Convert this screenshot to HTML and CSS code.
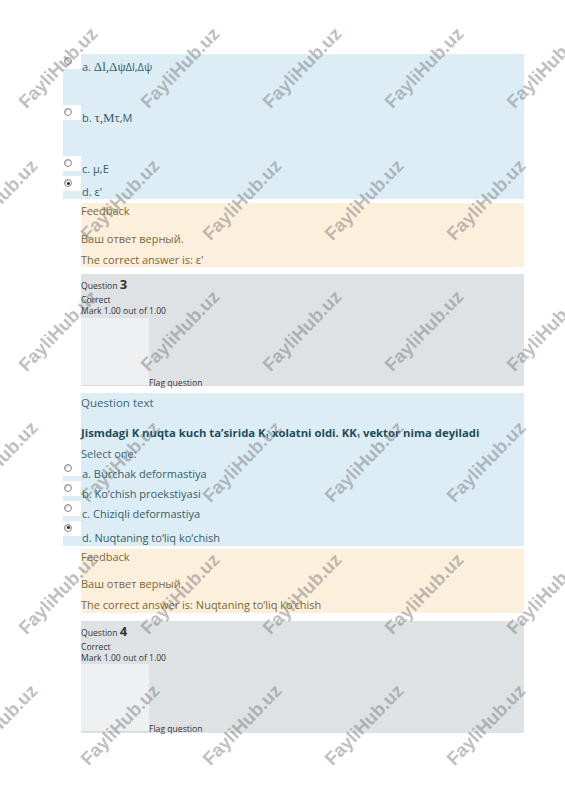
FILE: index.html
```html
<!DOCTYPE html>
<html lang="en">
<head>
<meta charset="utf-8">
<title>Quiz review</title>
<link rel="stylesheet" href="styles.css">
</head>
<body>
<div class="page">
  <div class="answers q1">
    <div class="opt tall">
      <div class="radio-cell"><div class="radio-box"><span class="radio"></span></div></div>
      <div class="label">a. <span class="math">Δl,Δψ</span>Δl,Δψ</div>
    </div>
    <div class="opt tall">
      <div class="radio-cell"><div class="radio-box"><span class="radio"></span></div></div>
      <div class="label">b. <span class="math">τ,M</span>τ,M</div>
    </div>
    <div class="opt">
      <div class="radio-cell"><div class="radio-box"><span class="radio"></span></div></div>
      <div class="label">c. μ,E</div>
    </div>
    <div class="opt last">
      <div class="radio-cell"><div class="radio-box"><span class="radio on"></span></div></div>
      <div class="label">d. ε'</div>
    </div>
  </div>

  <div class="feedback first">
    <div class="fb-title">Feedback</div>
    <div class="fb-line1">Ваш ответ верный.</div>
    <div class="fb-line2">The correct answer is: ε'</div>
  </div>

  <div class="info first">
    <div class="qno">Question <strong>3</strong></div>
    <div class="state">Correct</div>
    <div class="mark">Mark 1.00 out of 1.00</div>
    <div class="flag-row">
      <div class="flag-box"></div>
      <div class="flag-text">Flag question</div>
    </div>
  </div>

  <div class="content">
    <div class="qtext-title">Question text</div>
    <div class="qtext">Jismdagi K nuqta kuch ta’sirida K<sub>1</sub> xolatni oldi. KK<sub>1</sub> vektor nima deyiladi</div>
    <div class="prompt">Select one:</div>
    <div class="answers q2">
      <div class="opt">
        <div class="radio-cell"><div class="radio-box"><span class="radio"></span></div></div>
        <div class="label">a. Burchak deformastiya</div>
      </div>
      <div class="opt">
        <div class="radio-cell"><div class="radio-box"><span class="radio"></span></div></div>
        <div class="label">b. Ko‘chish proekstiyasi</div>
      </div>
      <div class="opt">
        <div class="radio-cell"><div class="radio-box"><span class="radio"></span></div></div>
        <div class="label">c. Chiziqli deformastiya</div>
      </div>
      <div class="opt last">
        <div class="radio-cell"><div class="radio-box"><span class="radio on"></span></div></div>
        <div class="label">d. Nuqtaning to‘liq ko‘chish</div>
      </div>
    </div>
  </div>

  <div class="feedback second">
    <div class="fb-title">Feedback</div>
    <div class="fb-line1">Ваш ответ верный.</div>
    <div class="fb-line2">The correct answer is: Nuqtaning to‘liq ko‘chish</div>
  </div>

  <div class="info second">
    <div class="qno">Question <strong>4</strong></div>
    <div class="state">Correct</div>
    <div class="mark">Mark 1.00 out of 1.00</div>
    <div class="flag-row">
      <div class="flag-box"></div>
      <div class="flag-text">Flag question</div>
    </div>
  </div>
</div>

<div class="wm-layer" aria-hidden="true">
  <div class="wm-row odd"><span class="wm">FayliHub.uz</span><span class="wm">FayliHub.uz</span><span class="wm">FayliHub.uz</span><span class="wm">FayliHub.uz</span><span class="wm">FayliHub.uz</span></div>
  <div class="wm-row even"><span class="wm">FayliHub.uz</span><span class="wm">FayliHub.uz</span><span class="wm">FayliHub.uz</span><span class="wm">FayliHub.uz</span><span class="wm">FayliHub.uz</span><span class="wm">FayliHub.uz</span></div>
  <div class="wm-row odd"><span class="wm">FayliHub.uz</span><span class="wm">FayliHub.uz</span><span class="wm">FayliHub.uz</span><span class="wm">FayliHub.uz</span><span class="wm">FayliHub.uz</span></div>
  <div class="wm-row even"><span class="wm">FayliHub.uz</span><span class="wm">FayliHub.uz</span><span class="wm">FayliHub.uz</span><span class="wm">FayliHub.uz</span><span class="wm">FayliHub.uz</span><span class="wm">FayliHub.uz</span></div>
  <div class="wm-row odd"><span class="wm">FayliHub.uz</span><span class="wm">FayliHub.uz</span><span class="wm">FayliHub.uz</span><span class="wm">FayliHub.uz</span><span class="wm">FayliHub.uz</span></div>
  <div class="wm-row even"><span class="wm">FayliHub.uz</span><span class="wm">FayliHub.uz</span><span class="wm">FayliHub.uz</span><span class="wm">FayliHub.uz</span><span class="wm">FayliHub.uz</span><span class="wm">FayliHub.uz</span></div>
</div>
</body>
</html>
```

FILE: styles.css
```css
* { box-sizing: border-box; }

html, body { margin: 0; padding: 0; }

body {
  width: 565px;
  height: 800px;
  position: relative;
  overflow: hidden;
  background: #ffffff;
  font-family: "Open Sans", "Noto Sans", sans-serif;
}

.page {
  margin-left: 81px;
  width: 443px;
  padding-top: 54px;
}

/* answer lists */
.answers {
  margin-left: -18px;
  background: #dcedf5;
}

.opt {
  display: flex;
  height: 20px;
}
.opt.tall { height: 51px; }
.q1 .opt.last { height: 23px; }
.q2 .opt.last { height: 25px; }

.radio-cell {
  width: 18px;
  flex-shrink: 0;
}

.radio-box {
  height: 15px;
  background: #ffffff;
  padding: 3px 0 0 1px;
}

.radio {
  display: flex;
  align-items: center;
  justify-content: center;
  width: 8px;
  height: 8px;
  border-radius: 50%;
  border: 1px solid #8c8c8c;
  background: radial-gradient(circle at 60% 60%, #ffffff 40%, #dcdcdc 100%);
  box-shadow: inset 1px 1px 1px rgba(0, 0, 0, 0.15);
}
.radio.on::after {
  content: "";
  width: 3px;
  height: 3px;
  border-radius: 50%;
  background: #222222;
}

.label {
  padding-top: 5px;
  padding-left: 1px;
  font-size: 11px;
  line-height: 15px;
  color: #365e6b;
  white-space: nowrap;
}
.q1 .opt.last .label { padding-top: 8px; }
.q2 .opt.last .label { padding-top: 9px; }

.math {
  font-family: "Liberation Serif", "DejaVu Serif", serif;
  font-size: 13px;
}

/* feedback */
.feedback {
  height: 64px;
  background: #fcefdc;
  color: #7b6838;
  font-size: 11px;
  line-height: 15px;
}
.feedback.first { margin-top: 4px; }
.feedback.second { margin-top: 3px; }

.fb-line1 { margin-top: 12.5px; }
.fb-line2 { margin-top: 6px; }

/* question info */
.info {
  height: 112px;
  background: #dee2e5;
  color: #333333;
  font-size: 8.6px;
}
.info.first { margin-top: 7px; }
.info.second { margin-top: 8px; }

.qno {
  padding-top: 2px;
  line-height: 16px;
}
.qno strong {
  font-size: 13px;
  font-weight: 700;
}
.state { line-height: 12px; }
.mark { line-height: 11.5px; }

.flag-row {
  display: flex;
}
.flag-box {
  width: 68px;
  height: 68px;
  background: #eef0f1;
  border-bottom: 1px solid #d8dcdf;
}
.flag-text {
  align-self: flex-end;
  margin-bottom: -3px;
  line-height: 12px;
}

/* question text block */
.content {
  margin-top: 7px;
  background: #dcedf5;
}

.qtext-title {
  padding-top: 2px;
  font-size: 11.5px;
  line-height: 15px;
  color: #3f6676;
}

.qtext {
  margin-top: 14.5px;
  font-size: 11.3px;
  line-height: 15px;
  font-weight: 700;
  color: #1e4e5b;
  white-space: nowrap;
}
.qtext sub {
  font-size: 6px;
  vertical-align: -1px;
  line-height: 0;
}

.prompt {
  margin-top: 6px;
  font-size: 11px;
  line-height: 15px;
  color: #3f6676;
}

/* watermark overlay */
.wm-layer {
  position: absolute;
  top: 0;
  left: 0;
  width: 565px;
  height: 800px;
  padding-top: 2.3px;
  pointer-events: none;
  overflow: hidden;
}

.wm-row {
  display: flex;
  height: 131.4px;
}
.wm-row.odd { margin-left: -3px; }
.wm-row.even { margin-left: -63px; }

.wm {
  flex-shrink: 0;
  width: 122px;
  display: flex;
  align-items: center;
  justify-content: center;
  font-family: "Liberation Sans", Arial, sans-serif;
  font-weight: 700;
  font-size: 18.5px;
  color: rgba(120, 120, 120, 0.48);
  transform: rotate(-46deg);
  white-space: nowrap;
}
```
